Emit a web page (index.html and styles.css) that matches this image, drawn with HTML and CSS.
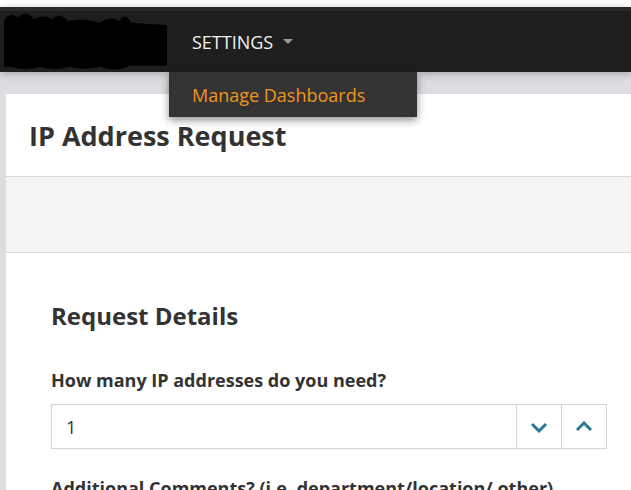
FILE: index.html
```html
<!DOCTYPE html>
<html>
<head>
<meta charset="utf-8">
<link rel="stylesheet" href="styles.css">
</head>
<body>
<div class="topgap"></div>
<nav class="navbar">
  <div class="brand">
    <svg width="170" height="62" viewBox="0 0 170 62">
      <path d="M4 10 Q8 0 18 6 Q26 -2 34 8 Q44 2 52 8 Q60 0 68 10 Q85 6 100 12 Q112 4 120 10 Q126 0 132 12 L168 14 L168 55 L130 55 Q118 62 100 56 Q85 60 70 56 Q55 61 40 56 Q25 61 12 56 L4 56 Z" fill="#000"/>
    </svg>
  </div>
  <div class="menu">
    <span class="menu-label">SETTINGS</span>
    <span class="caret"></span>
    <div class="dropdown">
      <a class="dropdown-item">Manage Dashboards</a>
    </div>
  </div>
</nav>
<main class="page">
  <section class="card">
    <header class="card-header">
      <h1 class="title">IP Address Request</h1>
    </header>
    <div class="card-band"></div>
    <div class="card-body">
      <h2 class="section-title">Request Details</h2>
      <label class="field-label">How many IP addresses do you need?</label>
      <div class="spinner">
        <span class="spinner-value">1</span>
        <button class="spin-btn" aria-label="decrease">
          <svg width="18" height="12" viewBox="0 0 18 12"><path d="M2 3 L9 10 L16 3" fill="none" stroke="#2a7a8e" stroke-width="3"/></svg>
        </button>
        <button class="spin-btn" aria-label="increase">
          <svg width="18" height="12" viewBox="0 0 18 12"><path d="M2 9 L9 2 L16 9" fill="none" stroke="#2a7a8e" stroke-width="3"/></svg>
        </button>
      </div>
      <label class="field-label second">Additional Comments? (i.e. department/location/ other)</label>
    </div>
  </section>
</main>
</body>
</html>
```

FILE: styles.css
```css
* { box-sizing: border-box; }
html, body { margin: 0; padding: 0; }
body {
  font-family: "Open Sans", "Liberation Sans", sans-serif;
  background: #dcdde0;
  width: 631px;
  height: 490px;
  overflow: hidden;
}
.topgap { height: 7px; background: #fff; }
.navbar {
  position: relative;
  z-index: 10;
  height: 65px;
  background: #1e1e1e;
  border-top: 4px solid #2b2b2b;
  display: flex;
  align-items: center;
  box-shadow: 0 2px 8px rgba(0,0,0,0.25);
}
.brand { width: 169px; height: 61px; display: flex; align-items: center; }
.brand svg { display: block; }
.menu {
  position: relative;
  height: 100%;
  display: flex;
  align-items: center;
  padding-left: 23px;
  width: 248px;
}
.menu-label { color: #f2f2f2; font-size: 18px; line-height: 24px; }
.caret {
  margin-left: 10px;
  width: 0; height: 0;
  border-left: 5.5px solid transparent;
  border-right: 5.5px solid transparent;
  border-top: 5px solid #9a9a9a;
}
.dropdown {
  position: absolute;
  left: 0;
  top: 61px;
  width: 248px;
  height: 45px;
  background: #333333;
  box-shadow: 0 3px 8px rgba(0,0,0,0.45);
  display: flex;
  align-items: center;
  padding-left: 23px;
}
.dropdown-item { color: #f0951d; font-size: 18px; line-height: 24px; }
.page { padding: 22px 0 0 6px; }
.card { background: #fff; height: 400px; }
.card-header {
  height: 83px;
  border-bottom: 1px solid #d9d9d9;
  display: flex;
  align-items: center;
  padding-left: 23px;
}
.title { margin: 0; font-size: 27px; line-height: 33px; font-weight: 700; color: #333; }
.card-band { height: 76px; background: #f4f4f4; border-bottom: 1px solid #d9d9d9; }
.card-body { padding: 48px 0 0 45px; }
.section-title { margin: 0; font-size: 24px; line-height: 30px; font-weight: 700; color: #333; }
.field-label { display: block; margin-top: 38px; font-size: 18px; line-height: 22px; font-weight: 700; color: #333; white-space: nowrap; }
.field-label.second { margin-top: 28px; }
.spinner {
  margin-top: 13px;
  width: 556px;
  height: 45px;
  border: 1px solid #d4d4d4;
  display: flex;
  align-items: center;
}
.spinner-value { flex: 1; padding-left: 14px; font-size: 18px; color: #333; }
.spin-btn {
  width: 45px;
  height: 100%;
  border: 0;
  border-left: 1px solid #d4d4d4;
  background: #fff;
  display: flex;
  align-items: center;
  justify-content: center;
  padding: 0;
}
.spin-btn svg { display: block; }
```
